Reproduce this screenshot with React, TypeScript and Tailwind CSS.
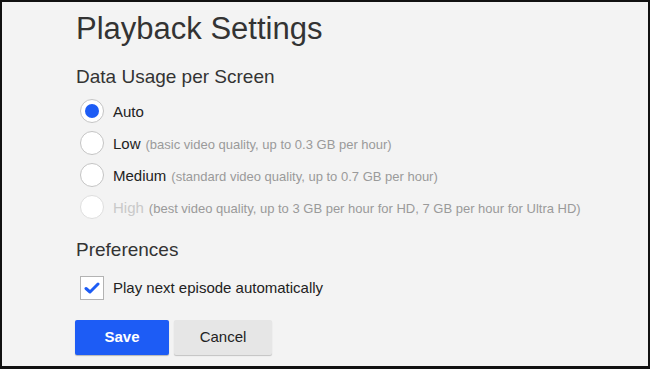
const options = [
  { label: 'Auto', note: '', checked: true, disabled: false },
  { label: 'Low', note: '(basic video quality, up to 0.3 GB per hour)', checked: false, disabled: false },
  { label: 'Medium', note: '(standard video quality, up to 0.7 GB per hour)', checked: false, disabled: false },
  {
    label: 'High',
    note: '(best video quality, up to 3 GB per hour for HD, 7 GB per hour for Ultra HD)',
    checked: false,
    disabled: true,
  },
];

function Radio({ checked, disabled }: { checked: boolean; disabled: boolean }) {
  return (
    <span
      className={`flex h-[24px] w-[24px] shrink-0 items-center justify-center rounded-full border bg-white ${
        disabled ? 'border-[#dedede] bg-[#f3f3f3]' : 'border-[#c4c4c4]'
      }`}
    >
      {checked && <span className="h-[14px] w-[14px] rounded-full bg-[#1d5cf5]" />}
    </span>
  );
}

export default function App() {
  return (
    <div className="h-[369px] w-[650px] overflow-hidden border-x-2 border-t-2 border-b-[3px] border-[#111] bg-[#f3f3f3] font-['Liberation_Sans',Arial,sans-serif] text-[#333]">
      <div className="pl-[74px] pt-[8px]">
        <h1 className="text-[31px] leading-[38px] text-[#333]">Playback Settings</h1>

        <h2 className="mt-[18px] text-[19px] leading-[22px]">Data Usage per Screen</h2>
        <div className="mt-[11px] flex flex-col gap-[8px] pl-[4px]">
          {options.map((o) => (
            <label key={o.label} className="flex h-[24px] items-center gap-[9px]">
              <Radio checked={o.checked} disabled={o.disabled} />
              <span className="text-[15px] leading-none">
                <span className={o.disabled ? 'text-[#c9c9c9]' : 'text-[#222]'}>{o.label}</span>
                {o.note && <span className="ml-[5px] text-[13px] text-[#9a9a9a]">{o.note}</span>}
              </span>
            </label>
          ))}
        </div>

        <h2 className="mt-[20px] text-[19px] leading-[22px]">Preferences</h2>
        <label className="mt-[15px] flex items-center gap-[9px] pl-[4px]">
          <span className="flex h-[24px] w-[24px] items-center justify-center border border-[#b3b3b3] bg-white">
            <svg width="16" height="14" viewBox="0 0 16 14">
              <path d="M2 7.5 L6 11 L14 3" fill="none" stroke="#1d5cf5" strokeWidth="3" strokeLinecap="round" strokeLinejoin="round" />
            </svg>
          </span>
          <span className="text-[15px] text-[#222]">Play next episode automatically</span>
        </label>

        <div className="ml-[-1px] mt-[20px] flex gap-[5px]">
          <button className="h-[35px] w-[94px] rounded-[2px] bg-[#1d5cf5] text-[15px] font-bold text-white shadow-[0_1px_1px_rgba(0,0,0,0.25)]">
            Save
          </button>
          <button className="h-[35px] w-[98px] rounded-[2px] bg-[#e6e6e6] text-[15px] text-[#222] shadow-[0_1px_1px_rgba(0,0,0,0.2)]">
            Cancel
          </button>
        </div>
      </div>
    </div>
  );
}
